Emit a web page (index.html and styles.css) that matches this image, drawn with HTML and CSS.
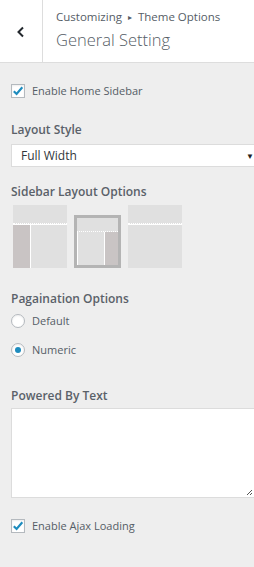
FILE: index.html
```html
<!DOCTYPE html>
<html>
<head>
<meta charset="utf-8">
<link rel="stylesheet" href="styles.css">
</head>
<body>
<div class="panel">
  <header class="head">
    <div class="back">
      <svg width="10" height="12" viewBox="0 0 10 12"><polyline points="7,1.5 2.5,6 7,10.5" fill="none" stroke="#23282d" stroke-width="2"/></svg>
    </div>
    <div class="titles">
      <div class="crumb">Customizing <span class="tri">▸</span> Theme Options</div>
      <div class="title">General Setting</div>
    </div>
  </header>
  <main class="body">
    <label class="check first">
      <span class="box"><svg width="12" height="12" viewBox="0 0 12 12"><polyline points="1.8,6.2 4.6,9 10.3,2.3" fill="none" stroke="#1e8cbe" stroke-width="2.2"/></svg></span>
      <span class="ctext">Enable Home Sidebar</span>
    </label>

    <div class="label l-layout">Layout Style</div>
    <div class="select"><span>Full Width</span><span class="arrow">▼</span></div>

    <div class="label l-sidebar">Sidebar Layout Options</div>
    <div class="thumbs">
      <div class="thumb">
        <div class="t-top"></div>
        <div class="t-row"><div class="t-side"></div><div class="t-main"></div></div>
      </div>
      <div class="thumb sel">
        <div class="t-top"></div>
        <div class="t-row"><div class="t-main"></div><div class="t-side"></div></div>
      </div>
      <div class="thumb">
        <div class="t-top"></div>
        <div class="t-row"><div class="t-main"></div></div>
      </div>
    </div>

    <div class="label l-pag">Pagaination Options</div>
    <div class="radio r1"><span class="circle"></span><span class="ctext">Default</span></div>
    <div class="radio r2"><span class="circle on"></span><span class="ctext">Numeric</span></div>

    <div class="label l-pow">Powered By Text</div>
    <div class="textarea"><svg class="grip" width="7" height="7" viewBox="0 0 7 7"><path d="M6 1 L1 6 M6 4 L4 6" stroke="#555" stroke-width="1" fill="none"/></svg></div>

    <label class="check last">
      <span class="box"><svg width="12" height="12" viewBox="0 0 12 12"><polyline points="1.8,6.2 4.6,9 10.3,2.3" fill="none" stroke="#1e8cbe" stroke-width="2.2"/></svg></span>
      <span class="ctext">Enable Ajax Loading</span>
    </label>
  </main>
</div>
</body>
</html>
```

FILE: styles.css
```css
html, body {
  margin: 0;
  padding: 0;
  background: #eeeeee;
  overflow: hidden;
  width: 254px;
  height: 567px;
}
body {
  font-family: "Open Sans", "Noto Sans", sans-serif;
  color: #555d66;
}
.panel {
  width: 254px;
}
.head {
  display: flex;
  height: 62px;
  background: #fff;
  border-bottom: 1px solid #dddddd;
}
.back {
  width: 42px;
  border-right: 1px solid #dddddd;
  display: flex;
  align-items: center;
  justify-content: center;
  padding-top: 1px;
}
.titles {
  padding: 9px 0 0 13px;
}
.crumb {
  font-size: 11.5px;
  line-height: 16px;
  color: #555d66;
}
.tri {
  font-size: 8px;
  position: relative;
  top: -1px;
  margin: 0 3px;
}
.title {
  font-size: 16.5px;
  font-weight: 300;
  line-height: 24px;
  margin-top: 2px;
  color: #555d66;
}
.body {
  padding: 0 0 0 11px;
  display: flex;
  flex-direction: column;
  align-items: flex-start;
}
.check {
  display: flex;
  align-items: center;
  font-size: 11px;
}
.check.first { margin-top: 20px; }
.check.last { margin-top: 20px; }
.box {
  width: 14px;
  height: 14px;
  box-sizing: border-box;
  border: 1px solid #b4b9be;
  background: #fff;
  display: flex;
  align-items: center;
  justify-content: center;
  margin-right: 7px;
  box-shadow: inset 0 1px 2px rgba(0,0,0,0.07);
}
.ctext {
  color: #555d66;
  line-height: 16px;
}
.label {
  font-size: 12px;
  font-weight: 600;
  line-height: 18px;
  color: #5a6169;
}
.l-layout { margin-top: 22px; }
.select {
  margin-top: 5px;
  width: 246px;
  height: 23px;
  box-sizing: border-box;
  background: #fff;
  border: 1px solid #dcdcdc;
  display: flex;
  align-items: center;
  justify-content: space-between;
  padding: 0 2px 0 9px;
  font-size: 12px;
  color: #32373c;
}
.arrow {
  font-size: 8px;
  color: #222;
}
.l-sidebar { margin-top: 16px; }
.thumbs {
  display: flex;
  align-items: flex-end;
  margin-top: 4px;
  margin-left: 2px;
  gap: 7px;
}
.thumb {
  width: 54px;
  height: 63px;
  display: flex;
  flex-direction: column;
  background: #e0e0e0;
  box-sizing: border-box;
}
.t-top {
  height: 18px;
  background: #e0e0e0;
  border-bottom: 1px dotted #fff;
  box-shadow: 0 1px 0 #fff;
}
.t-row {
  flex: 1;
  display: flex;
  margin-top: 1px;
}
.t-side {
  width: 17px;
  background: #c9c4c4;
}
.t-main {
  flex: 1;
  background: #e0e0e0;
}
.thumb .t-side + .t-main { border-left: 1px solid #fff; }
.thumb.sel {
  width: 47px;
  height: 53px;
  border: 3px solid #b4b4b4;
  padding: 0;
}
.thumb.sel .t-top { height: 13px; border-bottom-color: #fff; box-shadow: none; }
.thumb.sel .t-row { margin-top: 0; }
.thumb.sel .t-main { border-left: 1px solid #fff; border-right: 1px solid #fff; }
.thumb.sel .t-side { width: 13px; }
.l-pag { margin-top: 22px; }
.radio {
  display: flex;
  align-items: center;
  font-size: 11px;
}
.r1 { margin-top: 5px; }
.r2 { margin-top: 13px; }
.circle {
  width: 14px;
  height: 14px;
  box-sizing: border-box;
  border: 1px solid #b4b9be;
  border-radius: 50%;
  background: #fff;
  margin-right: 7px;
  display: flex;
  align-items: center;
  justify-content: center;
  box-shadow: inset 0 1px 2px rgba(0,0,0,0.07);
}
.circle.on::after {
  content: "";
  width: 6px;
  height: 6px;
  border-radius: 50%;
  background: #1e8cbe;
}
.l-pow { margin-top: 29px; }
.textarea {
  margin-top: 3px;
  width: 248px;
  height: 90px;
  box-sizing: border-box;
  background: #fff;
  border: 1px solid #dcdcdc;
  position: relative;
}
.grip {
  position: absolute;
  right: 5px;
  bottom: 1px;
}
```
